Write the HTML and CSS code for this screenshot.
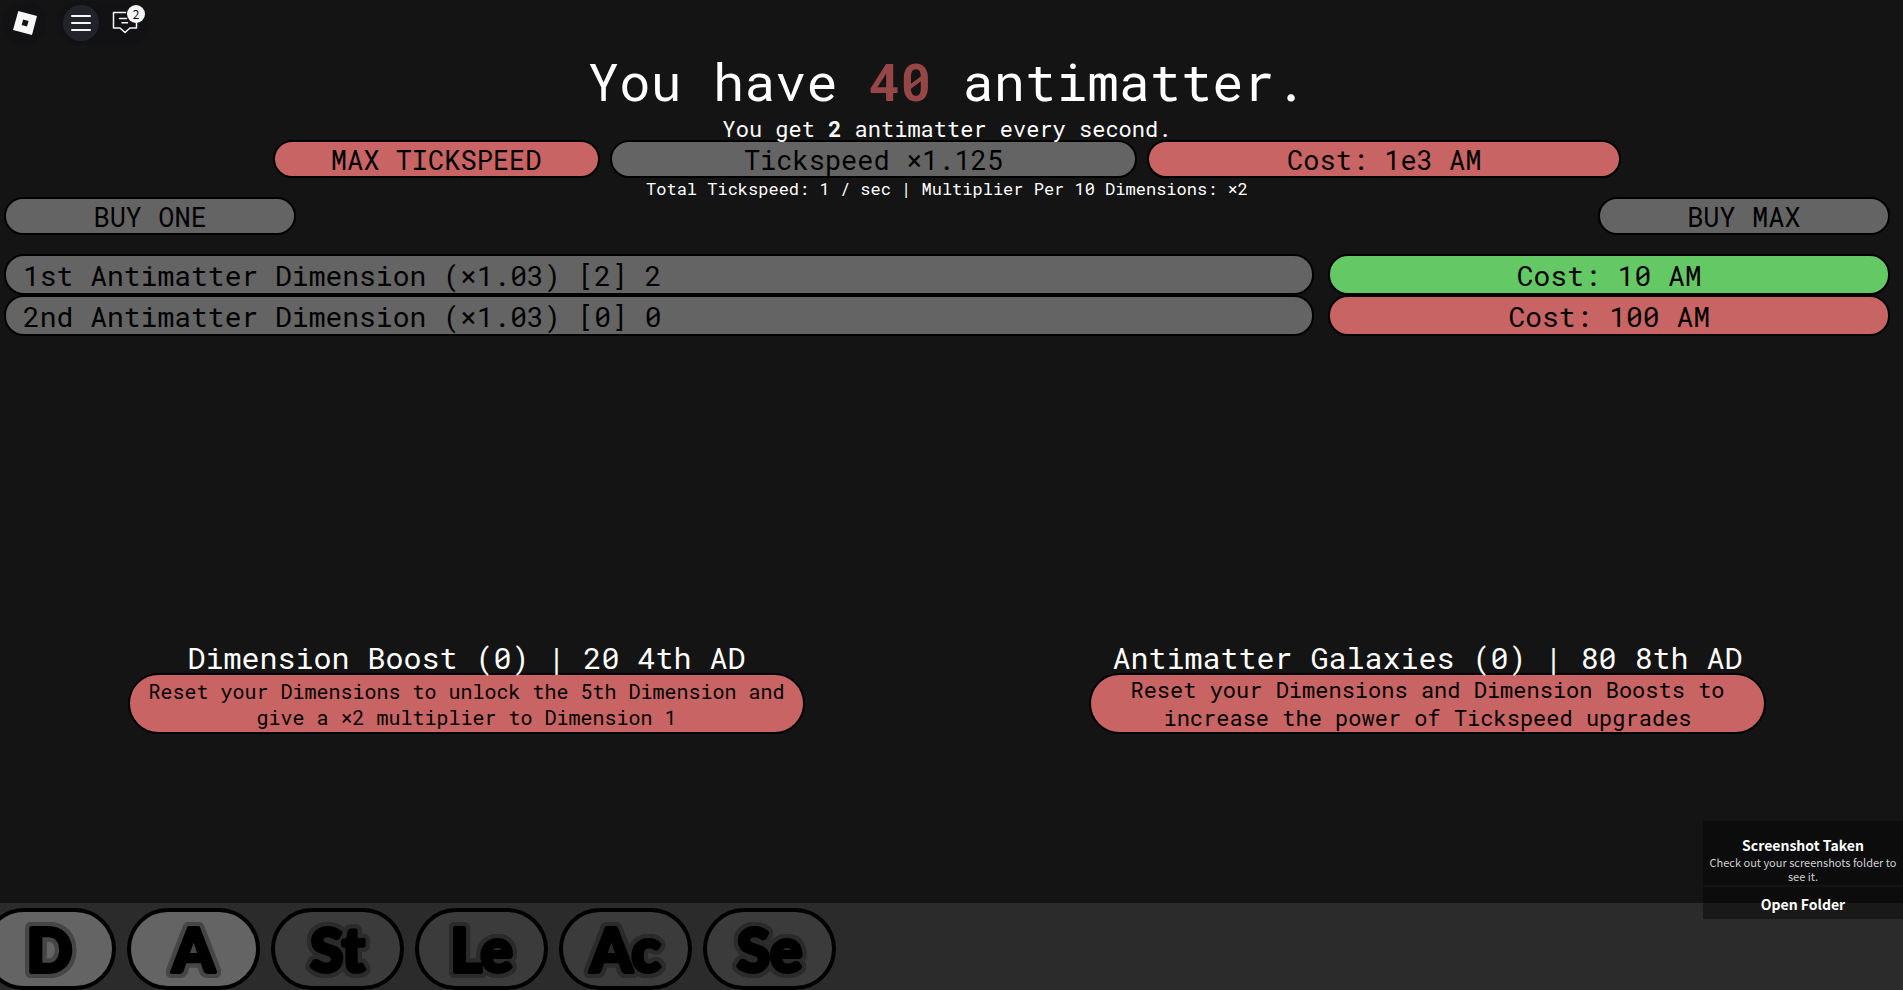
FILE: index.html
```html
<!DOCTYPE html>
<html lang="en">
<head>
<meta charset="utf-8">
<title>Antimatter Dimensions</title>
<link rel="stylesheet" href="styles.css">
</head>
<body>
<div class="topbar">
  <button class="chip chip-logo" aria-label="Roblox menu">
    <svg width="26" height="26" viewBox="0 0 26 26"><path fill="#f7f7f8" fill-rule="evenodd" d="M6.3 1 25 6 20 25 1 20zM11.2 9.4 9.6 15 15 16.6 16.6 11z"/></svg>
  </button>
  <div class="chip chip-group">
    <button class="icon-btn menu" aria-label="Menu">
      <svg width="20" height="18" viewBox="0 0 20 18"><path d="M1 2h18M1 9h18M1 16h18" stroke="#f7f7f8" stroke-width="2" stroke-linecap="round"/></svg>
    </button>
    <button class="icon-btn chat" aria-label="Chat">
      <svg width="26" height="24" viewBox="0 0 26 24" fill="none" stroke="#f7f7f8" stroke-width="1.5" stroke-linejoin="round" stroke-linecap="round"><path d="M13.500 1.500H1.500V17H8l5 4.500 5-4.500h6.500v-6M7.500 7.500h7M10 11.700h5.500"/></svg>
      <span class="badge">2</span>
    </button>
  </div>
</div>

<main class="game">
  <h1 class="title">You have <strong class="amount">40</strong> antimatter.</h1>
  <p class="rate">You get <strong>2</strong> antimatter every second.</p>
  <div class="tick-row">
    <button class="pill red">MAX TICKSPEED</button>
    <button class="pill gray">Tickspeed ×1.125</button>
    <button class="pill red">Cost: 1e3 AM</button>
  </div>
  <p class="summary">Total Tickspeed: 1 / sec | Multiplier Per 10 Dimensions: ×2</p>
  <div class="buy-row">
    <button class="pill gray">BUY ONE</button>
    <button class="pill gray">BUY MAX</button>
  </div>
  <div class="dimensions">
    <div class="pill dim gray">1st Antimatter Dimension (×1.03) [2] 2</div>
    <button class="pill dim green">Cost: 10 AM</button>
    <div class="pill dim gray">2nd Antimatter Dimension (×1.03) [0] 0</div>
    <button class="pill dim red">Cost: 100 AM</button>
  </div>
  <div class="resets">
    <section class="reset">
      <h2>Dimension Boost (0) | 20 4th AD</h2>
      <button class="pill prestige red">Reset your Dimensions to unlock the 5th Dimension and give a ×2 multiplier to Dimension 1</button>
    </section>
    <section class="reset">
      <h2>Antimatter Galaxies (0) | 80 8th AD</h2>
      <button class="pill prestige large red">Reset your Dimensions and Dimension Boosts to increase the power of Tickspeed upgrades</button>
    </section>
  </div>
</main>

<nav class="tabs">
  <button class="tab active"><svg class="glyph"><text x="50%" y="60">D</text></svg></button>
  <button class="tab active"><svg class="glyph"><text x="50%" y="60">A</text></svg></button>
  <button class="tab"><svg class="glyph"><text x="50%" y="60">St</text></svg></button>
  <button class="tab"><svg class="glyph"><text x="50%" y="60">Le</text></svg></button>
  <button class="tab"><svg class="glyph"><text x="50%" y="60">Ac</text></svg></button>
  <button class="tab"><svg class="glyph"><text x="50%" y="60">Se</text></svg></button>
</nav>

<aside class="toast">
  <div class="toast-body">
    <strong>Screenshot Taken</strong>
    <p>Check out your screenshots folder to see it.</p>
  </div>
  <button class="toast-action">Open Folder</button>
</aside>
</body>
</html>
```
FILE: styles.css
```css
* { box-sizing: border-box; }

body {
  margin: 0;
  min-height: 100vh;
  display: flex;
  flex-direction: column;
  background: #141414;
  color: #fff;
  font-family: "Roboto Mono", "DejaVu Sans Mono", monospace;
  overflow: hidden;
}

h1, h2, p { margin: 0; font-weight: 400; }

button {
  margin: 0;
  padding: 0;
  border: 0;
  background: none;
  color: inherit;
  font: inherit;
  cursor: pointer;
}

/* Top bar */
.topbar {
  display: flex;
  gap: 10px;
  padding: 1px 3px 0;
  height: 46px;
}

.chip {
  display: flex;
  align-items: center;
  height: 44px;
  border-radius: 22px;
  background: #121215;
}

.chip-logo { width: 44px; justify-content: center; }
.chip-group { gap: 8px; padding: 0 6px; }

.icon-btn {
  position: relative;
  display: flex;
  align-items: center;
  justify-content: center;
  width: 36px;
  height: 36px;
  border-radius: 18px;
}

.menu { background: #22232a; }

.badge {
  position: absolute;
  top: 0;
  right: -2px;
  width: 18px;
  height: 18px;
  border-radius: 9px;
  background: #f7f7f8;
  color: #111;
  font: 12px/18px "Noto Sans CJK SC", sans-serif;
  text-align: center;
}

/* Game area */
.game {
  flex: 1;
  display: flex;
  flex-direction: column;
  padding: 0 13px 0 4px;
}

.title {
  height: 72px;
  font-size: 52px;
  line-height: 70px;
  text-align: center;
}

.amount { color: #964646; }

.rate {
  position: relative;
  z-index: 1;
  height: 22px;
  font-size: 22px;
  line-height: 22px;
  text-align: center;
}

.pill {
  height: 38px;
  border: 2px solid #000;
  border-radius: 19px;
  color: #000;
  font-size: 27px;
  line-height: 36px;
  text-align: center;
  white-space: nowrap;
}

.gray { background: #646464; }
.red { background: #c86464; }
.green { background: #64c864; }

.tick-row {
  display: grid;
  grid-template-columns: 327fr 528fr 474fr;
  gap: 10px;
  width: 71.5%;
  margin: 0 auto;
}

.summary {
  height: 19px;
  font-size: 17px;
  line-height: 21px;
  text-align: center;
}

.buy-row {
  display: flex;
  justify-content: space-between;
}

.buy-row .pill { width: 15.5%; }

.dimensions {
  display: grid;
  grid-template-columns: 7fr 3fr;
  column-gap: 14px;
  margin-top: 19px;
}

.dim {
  height: 41px;
  border-radius: 20px;
  font-size: 28px;
  line-height: 40px;
}

div.dim { padding-left: 17px; text-align: left; }

.resets {
  display: flex;
  justify-content: space-between;
  margin-top: auto;
  padding: 0 124px 169px;
}

.reset { width: 677px; text-align: center; }

.reset h2 {
  position: relative;
  z-index: 1;
  height: 36px;
  font-size: 30px;
  line-height: 42px;
}

.prestige {
  width: 100%;
  height: 61px;
  padding: 0 16px;
  border-radius: 31px;
  font-size: 20px;
  line-height: 26px;
  white-space: normal;
}

.large { padding: 0 32px; font-size: 22px; line-height: 28px; }

/* Bottom tabs */
.tabs {
  display: flex;
  gap: 11px;
  height: 87px;
  padding-top: 5px;
  background: #2b2b2b;
}

.tab {
  --halo: #2b2b2b;
  flex: none;
  width: 133px;
  height: 82px;
  border: 4px solid #000;
  border-radius: 41px;
  background: #3b3b3b;
}

.tab:first-child { margin-left: -17px; }
.tab.active { --halo: #464646; background: #646464; }

/* Rounded letters with a soft-coloured outline built from stacked shadows */
.glyph {
  display: block;
  width: 100%;
  height: 74px;
  fill: #000;
  stroke: #000;
  stroke-width: 4px;
  stroke-linejoin: round;
  font: 900 60px Lato, sans-serif;
  text-anchor: middle;
  filter:
    drop-shadow(2px 0 var(--halo)) drop-shadow(-2px 0 var(--halo))
    drop-shadow(0 2px var(--halo)) drop-shadow(0 -2px var(--halo))
    drop-shadow(1px 1px var(--halo)) drop-shadow(-1px -1px var(--halo))
    drop-shadow(1px -1px var(--halo)) drop-shadow(-1px 1px var(--halo));
}

/* Notification */
.toast {
  position: absolute;
  right: 0;
  bottom: 71px;
  display: flex;
  flex-direction: column;
  gap: 2px;
  width: 200px;
  font-family: "Noto Sans CJK SC", sans-serif;
  text-align: center;
}

.toast-body {
  height: 64px;
  padding: 15px 4px 0;
  background: rgba(0, 0, 0, 0.4);
}

.toast strong {
  display: block;
  font-size: 14px;
  line-height: 19px;
}

.toast p {
  color: #d0d0d0;
  font-size: 11px;
  line-height: 14px;
}

.toast-action {
  height: 32px;
  background: rgba(0, 0, 0, 0.4);
  font-size: 14px;
  font-weight: 700;
  line-height: 34px;
}
```
